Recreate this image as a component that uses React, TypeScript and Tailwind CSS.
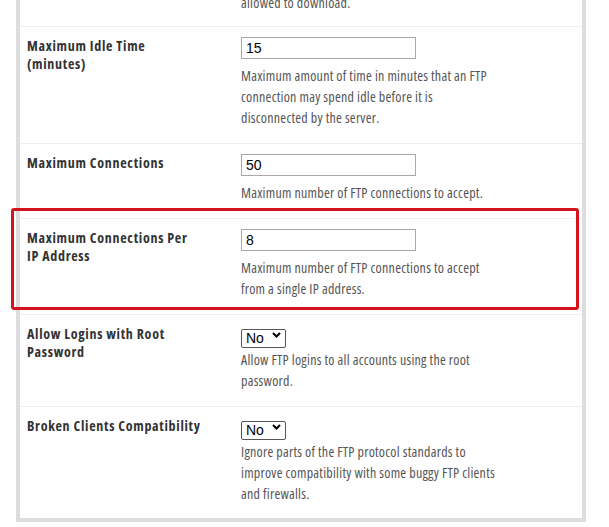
import React from 'react';

type Row = {
  label: string;
  kind: 'input' | 'select';
  value: string;
  desc: string;
};

const rows: Row[] = [
  {
    label: 'Maximum Idle Time (minutes)',
    kind: 'input',
    value: '15',
    desc: 'Maximum amount of time in minutes that an FTP connection may spend idle before it is disconnected by the server.',
  },
  {
    label: 'Maximum Connections',
    kind: 'input',
    value: '50',
    desc: 'Maximum number of FTP connections to accept.',
  },
  {
    label: 'Maximum Connections Per IP Address',
    kind: 'input',
    value: '8',
    desc: 'Maximum number of FTP connections to accept from a single IP address.',
  },
  {
    label: 'Allow Logins with Root Password',
    kind: 'select',
    value: 'No',
    desc: 'Allow FTP logins to all accounts using the root password.',
  },
  {
    label: 'Broken Clients Compatibility',
    kind: 'select',
    value: 'No',
    desc: 'Ignore parts of the FTP protocol standards to improve compatibility with some buggy FTP clients and firewalls.',
  },
];

// the screenshot's text is narrow: condensed Open Sans, opened up a little
const sans = "font-['Open_Sans',_'Liberation_Sans',_sans-serif] [font-stretch:75%]";
const descCls = 'max-w-[258px] text-[14px] leading-[21px] tracking-[0.25px] text-[#555]';

function Field({ row }: { row: Row }) {
  if (row.kind === 'input') {
    return (
      <input
        type="text"
        defaultValue={row.value}
        className="w-[175px] h-[22px] border border-[#a9a9a9] bg-white px-[4px] text-[14px] text-black font-['Liberation_Sans',_Arial,_sans-serif] outline-none"
      />
    );
  }
  return (
    <div className="relative w-[45px] h-[19px]">
      <select
        defaultValue={row.value}
        className="appearance-none w-full h-full border border-[#555] rounded-[2px] bg-white pl-[4px] text-[14px] leading-[17px] text-black font-['Liberation_Sans',_Arial,_sans-serif] outline-none"
      >
        <option>No</option>
        <option>Yes</option>
      </select>
      <svg
        className="pointer-events-none absolute right-[5px] top-[7px]"
        width="9"
        height="6"
        viewBox="0 0 9 6"
        fill="none"
      >
        <path d="M1 1l3.5 3.5L8 1" stroke="#000" strokeWidth="2" />
      </svg>
    </div>
  );
}

export default function App() {
  return (
    <div className={`relative w-[609px] h-[527px] overflow-hidden bg-white ${sans}`}>
      <div className="ml-[16px] w-[570px] border-x-4 border-b-4 border-[#dddddd] bg-white">
        <div className="flex mt-[-8px] pb-[13px]">
          <div className="w-[221px] shrink-0" />
          <p className={descCls}>allowed to download.</p>
        </div>
        {rows.map((row, i) => (
          <div
            key={row.label}
            className={`flex border-t border-[#eeeeee] pt-[10px] ${i === rows.length - 1 ? 'pb-[14px]' : 'pb-[15px]'}`}
          >
            <div className="w-[221px] shrink-0 pl-[7px] pr-[40px] text-[14px] leading-[18px] tracking-[0.7px] font-bold text-[#333]">
              {row.label}
            </div>
            <div className="flex flex-col">
              <Field row={row} />
              <p className={`${descCls} ${row.kind === 'input' ? 'mt-[6px]' : 'mt-[5px]'}`}>{row.desc}</p>
            </div>
          </div>
        ))}
      </div>
      <div className="pointer-events-none absolute left-[11px] top-[208px] w-[568px] h-[102px] border-[3px] border-[#d3141c] rounded-[3px]" />
    </div>
  );
}
